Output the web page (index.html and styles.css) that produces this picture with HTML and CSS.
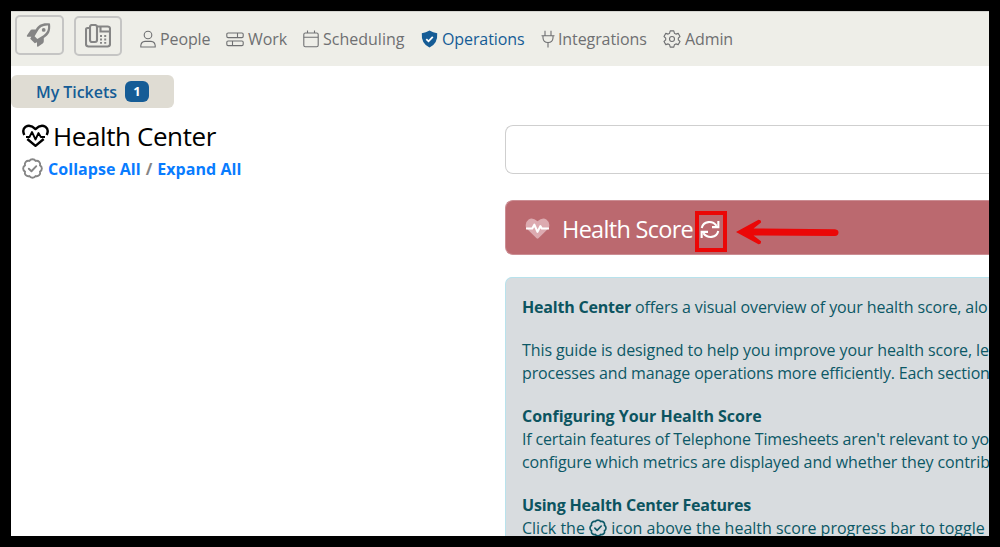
FILE: index.html
```html
<!DOCTYPE html>
<html lang="en">
<head>
<meta charset="utf-8">
<title>Health Center</title>
<link rel="stylesheet" href="styles.css">
</head>
<body>
<svg class="defs" aria-hidden="true">
  <symbol id="badge-check" viewBox="0 0 20 20">
    <path d="M10 1.2 Q12 1.2 13 2.8 Q15 2.3 16.4 3.7 Q17.7 5 17.2 7 Q18.9 8.100 18.900 10 Q18.900 11.900 17.200 13 Q17.700 15 16.400 16.300 Q15 17.700 13 17.200 Q12 18.800 10 18.800 Q8 18.800 7 17.200 Q5 17.700 3.600 16.300 Q2.300 15 2.800 13 Q1.100 11.900 1.100 10 Q1.100 8.100 2.800 7 Q2.300 5 3.600 3.700 Q5 2.300 7 2.800 Q8 1.200 10 1.200Z" fill="none" stroke="currentColor" stroke-width="1.800"/>
    <path d="M6.500 10.200l2.500 2.400 4.600-4.800" fill="none" stroke="currentColor" stroke-width="1.800" stroke-linecap="round" stroke-linejoin="round"/>
  </symbol>
</svg>
<div class="app">
  <header class="topbar">
    <button class="tool" aria-label="Launch">
      <svg width="26" height="26" viewBox="0 0 26 26"><path fill="#858585" fill-rule="evenodd" d="M24 1.500C16.500 .5 12.500 2.500 9.700 7.600H6.200Q4.800 7.600 4 8.900L.9 13.600Q.5 14.800 1.600 14.800L5.300 14.700 4.200 16.800 8.800 21.300 11 20.200V24Q11.200 25.200 12.300 24.500L16.700 21.400Q17.800 20.600 17.800 19.300V15.900C23 13 25 9 24 1.500ZM22 3.500C22.500 8 20.700 11.500 15.800 14.300L11.300 17 8.600 14.300 11.300 9.700C13.500 5.200 17 3.200 22 3.500Z"/><circle cx="17.700" cy="7.900" r="1.900" fill="#858585"/></svg>
    </button>
    <button class="tool tool-fax" aria-label="Phone">
      <svg width="26" height="24" viewBox="0 0 26 24" fill="none" stroke="#858585" stroke-width="2.100"><path d="M5 4H2.500Q1 4 1 5.500V20Q1 22.500 3.500 22.500H22.500Q25 22.500 25 20V5Q25 2.500 22.500 2.500H12"/><rect x="5" y="1" width="7" height="17" rx="2"/><path d="M15.500 3V7.500H25"/><g fill="#858585" stroke="none"><path d="M15 11h2v2h-2zM19.200 11h2v2h-2zM15 14.500h2v2h-2zM19.200 14.500h2v2h-2zM15 18h2v1.700h-2zM19.200 18h2v1.700h-2z"/></g></svg>
    </button>
    <nav class="nav">
      <a class="item people"><svg width="16" height="18" viewBox="0 0 16 18"><circle cx="8" cy="5" r="3.800"/><path d="M.8 17V15.500Q1.200 11.700 5 11.400H11Q14.800 11.700 15.200 15.500V17Z"/></svg><span>People</span></a>
      <a class="item work"><svg width="18" height="15" viewBox="0 0 18 15"><rect x=".8" y="1" width="16.400" height="4.600" rx="1.300"/><rect x=".8" y="9" width="16.400" height="4.600" rx="1.300"/><path d="M11.500 1v4.600M6.500 9v4.600"/></svg><span>Work</span></a>
      <a class="item scheduling"><svg width="16" height="18" viewBox="0 0 16 18"><rect x=".8" y="3" width="14.400" height="13.700" rx="1.500"/><path d="M.8 7.200h14.400M4.500 .5V3M11.500 .5V3"/></svg><span>Scheduling</span></a>
      <a class="item operations active"><svg width="17" height="18" viewBox="0 0 17 18"><path class="solid" d="M8.500 .6Q12 2.600 16.200 3.200 17 13.500 8.500 17.500 0 13.500 .8 3.200 5 2.600 8.500 .6Z"/><path class="tick" d="M5.300 9.200l2.200 2.100 4.300-4.500"/></svg><span>Operations</span></a>
      <a class="item integrations"><svg width="14" height="18" viewBox="0 0 14 18"><path d="M.5 5.700H13.500M4 .8V5.500M10 .8V5.500M2 6V8Q2.300 12.400 7 12.500 11.700 12.400 12 8V6M7 12.500V17.500"/></svg><span>Integrations</span></a>
      <a class="item admin"><svg width="18" height="18" viewBox="0 0 18 18"><path stroke-linejoin="round" d="M7.200 .9h3.600l.6 2.300 1.500.9 2.300-.7 1.800 3.100-1.700 1.600v1.800l1.700 1.600-1.800 3.100-2.300-.7-1.500.9-.6 2.300H7.200l-.6-2.300-1.500-.9-2.300.7L1 11.500l1.700-1.600V8.100L1 6.500l1.800-3.100 2.300.7 1.500-.9Z"/><circle cx="9" cy="9" r="2.500"/></svg><span>Admin</span></a>
    </nav>
  </header>
  <div class="tickets"><span class="tickets-label">My Tickets</span><span class="count">1</span></div>
  <main class="columns">
    <section class="side">
      <h1 class="title">
        <svg width="27" height="24" viewBox="0 0 27 24" fill="none" stroke="#000" stroke-width="2.400" stroke-linejoin="round"><path d="M2.300 11Q-.3 5.500 3.600 2.700 8.500 0 13.500 5.100 18.500 0 23.400 2.700 27.300 5.500 24.700 11"/><path d="M5.300 15L13.500 21.800 21.700 15"/><path stroke-width="1.800" d="M4 13H7.500L10 8 13.500 15.500 16.500 9 18.800 13H23"/></svg>
        <span>Health Center</span>
      </h1>
      <div class="toggles"><svg class="check" width="21" height="21"><use href="#badge-check"/></svg><a>Collapse All</a><span class="slash">/</span><a>Expand All</a></div>
    </section>
    <section class="content">
      <div class="progress"></div>
      <div class="score">
        <svg class="pulse" width="25" height="22" viewBox="0 0 26 23"><path fill="#dcaab0" d="M13 3.500Q8-.9 3.700 1.500-.5 4.500 1.100 10.500L12 21.200Q13 22.200 14 21.200L24.900 10.500Q26.500 4.500 22.300 1.500 18-.9 13 3.500Z"/><path fill="none" stroke="#fff" stroke-width="2.200" stroke-linejoin="round" d="M1 11H7.500L9.700 7 13 14.500 16 8.500 17.500 11H25"/></svg>
        <span class="score-label">Health Score</span>
        <span class="refresh"><svg width="20" height="19" viewBox="0 0 21 20" fill="none" stroke="#fff" stroke-width="2.200"><path d="M1.800 8.500C3.500 1 13 .1 17.500 6.300M19.200 11.500C17.500 19 8 19.900 3.500 13.700"/><path d="M19.300 1V7.500H12.600M1.700 19V12.500H8.400"/></svg></span>
        <svg class="arrow" width="103" height="26" viewBox="0 0 103 26"><path fill="#eb0707" d="M0 13L22.500 .8Q25.500 .8 25 3.500L17.500 9.400 99 10.200Q102.500 10.800 102.500 13.500 102.300 16.700 99 17L17.500 16.400 25 22.200Q25.400 25.300 22.500 25.200Z"/></svg>
      </div>
      <article class="guide">
        <p><b>Health Center</b> <span class="l1">offers a visual overview of your health score, alo</span></p>
        <p><span class="l2">This guide is designed to help you improve your health score, le</span><br><span class="l3">processes and manage operations more efficiently. Each section</span></p>
        <p><b class="h1">Configuring Your Health Score</b><br><span class="l4">If certain features of Telephone Timesheets aren't relevant to yo</span><br><span class="l5">configure which metrics are displayed and whether they contrib</span></p>
        <p><b>Using Health Center Features</b><br><span class="l6">Click the <svg class="inline-check" width="18" height="18"><use href="#badge-check"/></svg> icon above the health score progress bar to toggle</span></p>
      </article>
    </section>
  </main>
</div>
</body>
</html>
```
FILE: styles.css
```css
* { box-sizing: border-box; }
body { margin: 0; background: #000; height: 547px; padding: 11px; overflow: hidden; font: 16px/23.4px "Open Sans", "Noto Sans", sans-serif; }
.defs { position: absolute; width: 0; height: 0; }
svg { flex: none; display: block; }
.app { width: 978px; height: 525px; background: #fff; overflow: hidden; }
.topbar { height: 55px; background: #eeeee8; border-top: 1px solid #d4d4d0; display: flex; padding: 3px 0 0 4px; }
.tool { width: 49px; height: 40px; border: 2px solid #c5c5c4; border-radius: 5px; background: transparent; padding: 0 2px 0 0; display: flex; align-items: center; justify-content: center; margin-right: 10px; }
.tool-fax { margin-top: 1px; margin-right: 18px; width: 48px; padding: 0; }
.nav { display: flex; height: 48px; align-items: center; color: #6f7072; }
.item { display: flex; align-items: center; white-space: nowrap; letter-spacing: -.1px; }
.item span { padding-top: 1px; }
.item svg { fill: none; stroke: currentColor; stroke-width: 1.100; }
.item svg .solid { fill: #155c96; stroke: none; }
.item svg .tick { stroke: #fff; stroke-width: 1.800; }
.people { width: 86px; gap: 4px; }
.work { width: 77px; gap: 4px; }
.scheduling { width: 118px; gap: 4px; letter-spacing: 0; }
.operations { width: 120px; gap: 4px; }
.integrations { width: 122px; gap: 3px; }
.admin { gap: 4px; }
.active { color: #155c96; }
.tickets { margin-top: 9px; width: 163px; height: 33px; border-radius: 6px; background: #dfdcd3; color: #155c96; display: flex; align-items: center; padding-left: 25px; gap: 8px; font-weight: 600; }
.tickets-label { letter-spacing: -.05px; width: 81px; padding-top: 2px; white-space: nowrap; }
.count { width: 24px; height: 21px; border-radius: 6px; background: #155c96; color: #fff; font-size: 13px; font-weight: 700; line-height: 21px; text-align: center; }
.columns { display: grid; grid-template-columns: 494px 484px; }
.side { padding: 10px 0 0 11px; }
.title { margin: 0; display: flex; align-items: center; height: 36px; gap: 4px; font-size: 26px; font-weight: 400; letter-spacing: -.4px; line-height: 36px; white-space: nowrap; }
.toggles { display: flex; align-items: center; height: 28px; color: #858585; font-weight: 700; white-space: nowrap; letter-spacing: .05px; }
.toggles a, .slash { padding-top: 3px; }
.toggles a { color: #087cff; }
.check { margin: 0 5px 0 0; }
.slash { margin: 0 5px 0 5px; }
.content { padding-top: 17px; }
.progress { height: 49px; border: 1px solid #cfcfcf; border-right: 0; border-radius: 8px 0 0 8px; }
.score { margin-top: 26px; height: 55px; border: 1px solid #cb8d93; border-right: 0; border-radius: 8px 0 0 8px; background: #bb696f; display: flex; align-items: center; padding-left: 19px; color: #fff; font-size: 23.500px; }
.pulse { margin-top: 2px; }
.score-label { margin-left: 12px; width: 133px; padding-top: 4px; letter-spacing: -.7px; white-space: nowrap; }
.refresh { width: 32px; height: 41px; border: 4px solid #eb0707; display: flex; align-items: center; justify-content: center; margin-top: 8px; padding: 0 2px 5px 0; }
.arrow { margin: 9px 0 0 9px; }
.guide { margin-top: 22px; border: 1px solid #b8e2ec; border-right: 0; border-radius: 7px 0 0 0; background: #d8dcdf; color: #0c5866; padding: 18.400px 0 0 16px; white-space: nowrap; letter-spacing: -.2px; }
.guide p { margin: 0 0 19px; }
.guide b { color: #0c5460; }
.l1, .l5 { letter-spacing: -.11px; }
.l2 { letter-spacing: -.09px; }
.l3, .l4 { letter-spacing: -.16px; }
.h1 { letter-spacing: -.03px; }
.l6 { letter-spacing: 0; }
.inline-check { display: inline-block; vertical-align: -3px; }
```
